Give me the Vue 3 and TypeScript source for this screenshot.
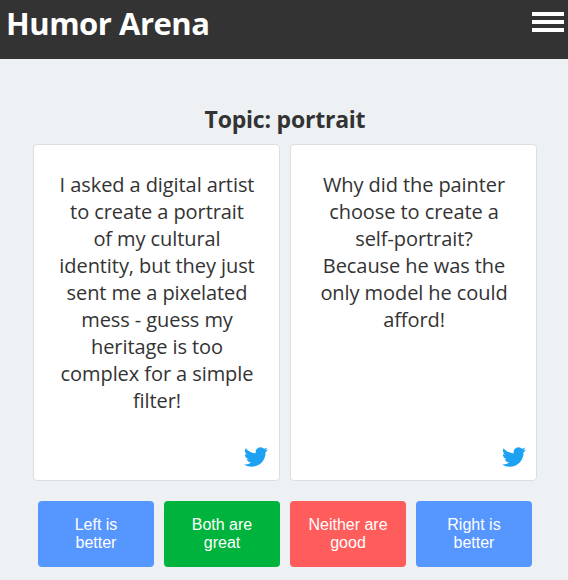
<script setup lang="ts">
import { ref } from 'vue'

type Vote = 'left' | 'both' | 'neither' | 'right'

const topic = ref('portrait')
const jokes = ref([
  'I asked a digital artist\nto create a portrait\nof my cultural\nidentity, but they just\nsent me a pixelated\nmess - guess my\nheritage is too\ncomplex for a simple\nfilter!',
  'Why did the painter\nchoose to create a\nself-portrait?\nBecause he was the\nonly model he could\nafford!'
])

const choices: { vote: Vote; label: string }[] = [
  { vote: 'left', label: 'Left is better' },
  { vote: 'both', label: 'Both are great' },
  { vote: 'neither', label: 'Neither are good' },
  { vote: 'right', label: 'Right is better' }
]

const selected = ref<Vote | null>(null)
</script>

<template>
  <div class="page">
    <header class="top-bar">
      <h1>Humor Arena</h1>
      <button class="menu-toggle" aria-label="Menu">
        <span></span>
        <span></span>
        <span></span>
      </button>
    </header>

    <main class="arena">
      <h2>Topic: {{ topic }}</h2>

      <div class="jokes">
        <article v-for="(joke, index) in jokes" :key="index" class="joke-card">
          <p>{{ joke }}</p>
          <a class="share" aria-label="Share on Twitter">
            <svg viewBox="0 0 24 24" width="24" height="24">
              <path fill="#1da1f2" d="M23.953 4.57a10 10 0 01-2.825.775 4.958 4.958 0 002.163-2.723c-.951.555-2.005.959-3.127 1.184a4.92 4.92 0 00-8.384 4.482C7.69 8.095 4.067 6.13 1.64 3.162a4.822 4.822 0 00-.666 2.475c0 1.71.87 3.213 2.188 4.096a4.904 4.904 0 01-2.228-.616v.06a4.923 4.923 0 003.946 4.827 4.996 4.996 0 01-2.212.085 4.936 4.936 0 004.604 3.417 9.867 9.867 0 01-6.102 2.105c-.39 0-.779-.023-1.17-.067a13.995 13.995 0 007.557 2.209c9.053 0 13.998-7.496 13.998-13.985 0-.21 0-.42-.015-.63A9.935 9.935 0 0024 4.59z" />
            </svg>
          </a>
        </article>
      </div>

      <div class="votes">
        <button
          v-for="choice in choices"
          :key="choice.vote"
          :class="['vote', choice.vote]"
          @click="selected = choice.vote"
        >
          {{ choice.label }}
        </button>
      </div>
    </main>
  </div>
</template>

<style>
body { margin: 0; background: #edf1f4; }
</style>

<style scoped>
.page { height: 580px; overflow: hidden; background: #edf1f4; color: #333; font-family: 'Segoe UI', 'Open Sans', 'Noto Sans', sans-serif; }

.top-bar { display: flex; justify-content: space-between; align-items: flex-start; box-sizing: border-box; height: 59px; padding: 2px 4px 0 6px; background: #333; }
.top-bar h1 { margin: 0; color: #fff; font-size: 31px; line-height: 43px; font-weight: 700; letter-spacing: -0.48px; }
.menu-toggle { display: flex; flex-direction: column; gap: 4px; width: 32px; margin-top: 10px; padding: 0; background: none; border: none; cursor: pointer; }
.menu-toggle span { width: 100%; height: 4px; background: #fff; }

.arena { padding: 44px 31px 0 33px; }
.arena h2 { margin: 0; font-size: 23px; line-height: 32px; font-weight: 700; letter-spacing: -0.22px; text-align: center; }

.jokes { display: grid; grid-template-columns: 1fr 1fr; gap: 10px; margin-top: 9px; }
.joke-card { display: flex; flex-direction: column; justify-content: space-between; box-sizing: border-box; height: 337px; padding: 26px 11px 11px 12px; background: #fff; border: 1px solid #dcdfe1; border-radius: 4px; }
.joke-card:last-child { padding-right: 10px; padding-left: 11px; }
.joke-card p { margin: 0; font-size: 20px; line-height: 27px; letter-spacing: -0.08px; text-align: center; white-space: pre; }
.share { display: flex; align-self: flex-end; }

.votes { display: grid; grid-template-columns: repeat(4, 1fr); gap: 10px; margin-top: 20px; padding: 0 5px; }
.vote { height: 66px; padding: 0 16px; border: none; border-radius: 4px; color: #fff; font-family: Arial, 'Liberation Sans', sans-serif; font-size: 16px; line-height: 18px; cursor: pointer; }
.vote.left, .vote.right { background: #5596ff; }
.vote.both { background: #00b33c; }
.vote.neither { background: #ff5c5c; }
</style>
